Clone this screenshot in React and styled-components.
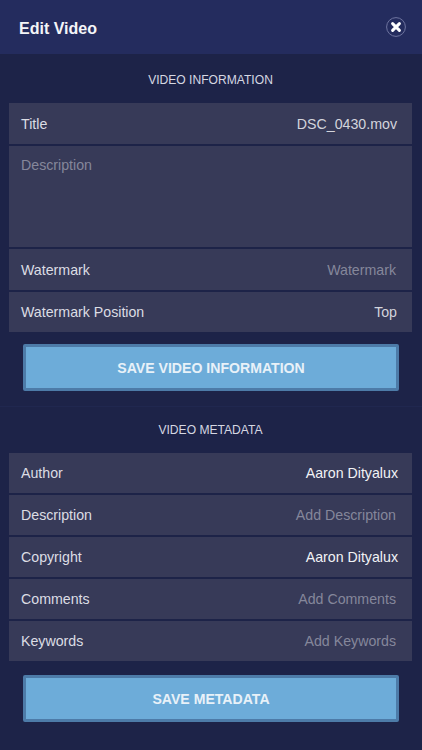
import React from 'react'
import styled, { createGlobalStyle } from 'styled-components'

const GlobalStyle = createGlobalStyle`
  html, body {
    margin: 0;
    padding: 0;
    background: #1d2348;
    font-family: "Liberation Sans", Arial, sans-serif;
  }
`

const Screen = styled.div`
  width: 422px;
  height: 750px;
  overflow: hidden;
  background: #1d2348;
  display: flex;
  flex-direction: column;
`

const Header = styled.header`
  height: 54px;
  flex: none;
  display: flex;
  align-items: center;
  justify-content: space-between;
  padding: 0 16px 0 19px;
  box-sizing: border-box;
  background: #242c5e;
`

const HeaderTitle = styled.h1`
  margin: 3px 0 0;
  font-size: 16px;
  font-weight: 700;
  color: #f4f5f8;
`

const CloseButton = styled.button`
  width: 20px;
  height: 20px;
  margin-top: -1px;
  padding: 0;
  border: 0;
  background: none;
  display: block;

  svg {
    display: block;
  }
`

const Section = styled.section`
  display: flex;
  flex-direction: column;
  padding: 0 10px 0 9px;
  height: ${props => props.$height}px;
  flex: none;
  box-sizing: border-box;
  border-bottom: ${props => (props.$divided ? '1px solid #20274f' : '0')};
`

const SectionHeading = styled.h2`
  margin: 0;
  height: ${props => props.$height}px;
  padding-top: ${props => props.$nudge || 0}px;
  box-sizing: border-box;
  display: flex;
  align-items: center;
  justify-content: center;
  font-size: 12.1px;
  font-weight: 400;
  color: #d5d7e2;
`

const List = styled.div`
  display: flex;
  flex-direction: column;
  gap: 2px;
`

const Row = styled.div`
  height: ${props => props.$height || 40}px;
  display: flex;
  align-items: ${props => (props.$tall ? 'flex-start' : 'center')};
  justify-content: space-between;
  padding: ${props => (props.$tall ? '11px 15px 0 12px' : '0 15px 0 12px')};
  box-sizing: border-box;
  background: #373a58;
  font-size: 14.2px;
`

const Label = styled.span`
  color: ${props => (props.$placeholder ? '#85879b' : '#dcdde4')};
`

const Value = styled.span`
  color: ${props => {
    if (props.$placeholder) return '#85879b'
    return props.$bright ? '#f1f2f5' : '#d3d4dc'
  }};
  margin-right: ${props => {
    if (props.$placeholder) return '1px'
    return props.$bright ? '-1px' : '0'
  }};
`

const SaveButton = styled.button`
  display: block;
  width: 376px;
  height: 47px;
  margin: ${props => props.$top}px 0 0 14px;
  padding: 0;
  box-sizing: border-box;
  border: 3px solid #4d7ba8;
  border-radius: 2px;
  background: #6dacd9;
  color: #e8f1f8;
  font-family: inherit;
  font-size: 14.1px;
  font-weight: 700;
`

const CloseIcon = () => (
  <svg width="20" height="20" viewBox="0 0 20 20" fill="none">
    <circle cx="10" cy="10" r="9.4" stroke="#6f75a0" strokeWidth="1" />
    <path d="M6.6 6.6 13.4 13.4M13.4 6.6 6.6 13.4" stroke="#ffffff" strokeWidth="3" strokeLinecap="round" />
  </svg>
)

const App = () => (
  <Screen>
    <GlobalStyle />
    <Header>
      <HeaderTitle>Edit Video</HeaderTitle>
      <CloseButton aria-label="Close">
        <CloseIcon />
      </CloseButton>
    </Header>
    <Section $height={353} $divided>
      <SectionHeading $height={49} $nudge={2}>VIDEO INFORMATION</SectionHeading>
      <List>
        <Row $height={41}>
          <Label>Title</Label>
          <Value>DSC_0430.mov</Value>
        </Row>
        <Row $tall $height={101}>
          <Label $placeholder>Description</Label>
        </Row>
        <Row $height={41}>
          <Label>Watermark</Label>
          <Value $placeholder>Watermark</Value>
        </Row>
        <Row>
          <Label>Watermark Position</Label>
          <Value>Top</Value>
        </Row>
      </List>
      <SaveButton $top={12}>SAVE VIDEO INFORMATION</SaveButton>
    </Section>
    <Section $height={343}>
      <SectionHeading $height={46}>VIDEO METADATA</SectionHeading>
      <List>
        <Row>
          <Label>Author</Label>
          <Value $bright>Aaron Dityalux</Value>
        </Row>
        <Row>
          <Label>Description</Label>
          <Value $placeholder>Add Description</Value>
        </Row>
        <Row>
          <Label>Copyright</Label>
          <Value $bright>Aaron Dityalux</Value>
        </Row>
        <Row>
          <Label>Comments</Label>
          <Value $placeholder>Add Comments</Value>
        </Row>
        <Row>
          <Label>Keywords</Label>
          <Value $placeholder>Add Keywords</Value>
        </Row>
      </List>
      <SaveButton $top={14}>SAVE METADATA</SaveButton>
    </Section>
  </Screen>
)

export default App
